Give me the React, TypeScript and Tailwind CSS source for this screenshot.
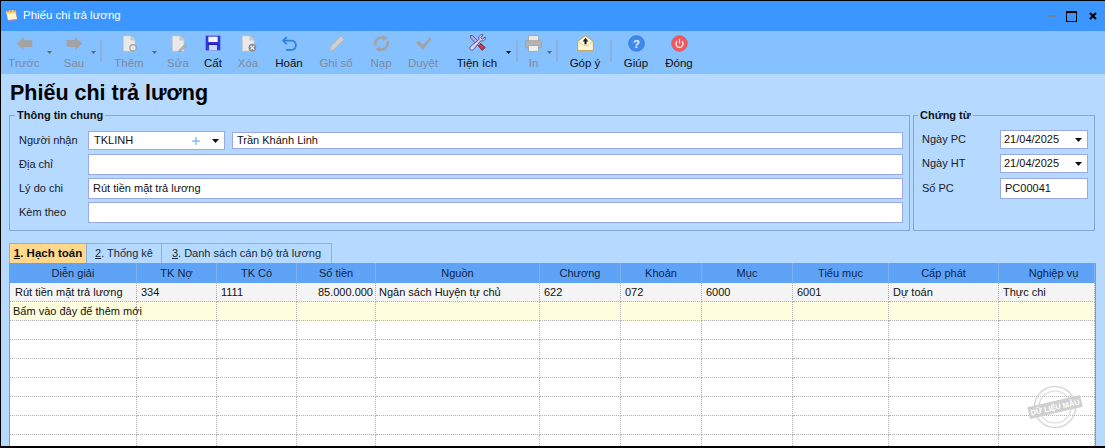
import React from "react";

const gray = "#a3a3a3";

function AppIcon() {
  return (
    <svg width="16" height="16" viewBox="0 0 16 16">
      <path d="M2 4 L12 2 L14 12 L4 14 Z" fill="#8f86d8" />
      <path d="M2 3 L11 2 L13 11 L4 12 Z" fill="#fdf6c8" />
      <path d="M2 3 L11 2 L11.6 5 L2.6 6 Z" fill="#f2cf6a" />
      <path d="M4 1 V4 M7 1 V4 M10 1 V3.5" stroke="#7a74b8" strokeWidth="1" />
    </svg>
  );
}

function ArrowLeft() {
  return (
    <svg width="17" height="17" viewBox="0 0 24 24">
      <path d="M1 12 L11 3 V7 H23 V17 H11 V21 Z" fill={gray} />
    </svg>
  );
}

function ArrowRight() {
  return (
    <svg width="17" height="17" viewBox="0 0 24 24">
      <path d="M23 12 L13 3 V7 H1 V17 H13 V21 Z" fill={gray} />
    </svg>
  );
}

function Doc({ children }: { children?: React.ReactNode }) {
  return (
    <svg width="17" height="17" viewBox="0 0 24 24">
      <path d="M3 1 H14 L20 7 V23 H3 Z" fill="#e9e9e9" stroke="#b8b8b8" />
      <path d="M14 1 V7 H20" fill="#cfcfcf" stroke="#b8b8b8" />
      {children}
    </svg>
  );
}

function Floppy() {
  return (
    <svg width="16" height="16" viewBox="0 0 24 24">
      <path d="M1 1 H23 V23 H1 Z" fill="#3535dc" />
      <rect x="5" y="2.5" width="14" height="8" fill="#f0f2ff" />
      <rect x="6" y="15" width="12" height="8" fill="#c9d4ff" />
      <rect x="4" y="13" width="16" height="2" fill="#1f1fb0" />
    </svg>
  );
}

function Undo() {
  return (
    <svg width="17" height="17" viewBox="0 0 24 24" fill="none">
      <path d="M8 3 L3 8 L8 13" stroke="#2f7fe0" strokeWidth="2.6" strokeLinejoin="round" />
      <path d="M4 8 H15 C23 8 23 21 15 21 H7" stroke="#2f7fe0" strokeWidth="2.6" />
    </svg>
  );
}

function Pencil() {
  return (
    <svg width="17" height="17" viewBox="0 0 24 24">
      <path d="M18 1 L23 6 L8 21 L2 23 L4 16 Z" fill="#cfcfcf" stroke="#aeaeae" />
    </svg>
  );
}

function Reload() {
  return (
    <svg width="17" height="17" viewBox="0 0 24 24" fill="none">
      <path d="M4 15 C1 8 8 2 15 4" stroke={gray} strokeWidth="3.6" />
      <path d="M20 9 C23 16 16 22 9 20" stroke={gray} strokeWidth="3.6" />
      <path d="M13 0 L21 4 L14 9 Z M11 24 L3 20 L10 15 Z" fill={gray} />
    </svg>
  );
}

function Check() {
  return (
    <svg width="17" height="17" viewBox="0 0 24 24">
      <path d="M1 10 L6 8 L11 14 L21 3 L23 6 L11 21 Z" fill={gray} />
    </svg>
  );
}

function Tools() {
  return (
    <svg width="18" height="18" viewBox="0 0 24 24">
      <path d="M3 2 L6 2 L20 16 L17 19 L4 6 Z" fill="#b5a5e8" stroke="#3b3560" strokeWidth="0.9" />
      <path d="M14 16 L19 22 L23 18 L17 13 Z" fill="#d8334a" stroke="#5a1320" strokeWidth="0.9" />
      <path d="M20 1 C17 0 13 3 15 7 L3 17 C1 20 4 23 7 21 L17 9 C20 10 24 8 23 4 L19 7 L17 5 Z" fill="#d9d2f5" stroke="#3b3560" strokeWidth="1" />
    </svg>
  );
}

function Printer() {
  return (
    <svg width="17" height="17" viewBox="0 0 24 24">
      <rect x="5" y="1" width="14" height="8" fill="#e8e8e8" stroke="#9e9e9e" />
      <rect x="1" y="8" width="22" height="10" rx="1" fill="#b4b4b4" stroke="#9a9a9a" />
      <rect x="5" y="15" width="14" height="8" fill="#eeeeee" stroke="#9e9e9e" />
    </svg>
  );
}

function Mail() {
  return (
    <svg width="17" height="17" viewBox="0 0 24 24">
      <path d="M1 9 L12 1 L23 9 V22 H1 Z" fill="#fff6d6" stroke="#c9a04a" strokeWidth="1.3" />
      <path d="M1 9 L9 15 H15 L23 9" fill="none" stroke="#d8b870" />
      <path d="M12 4 L16 9 H13.5 V13 H10.5 V9 H8 Z" fill="#222" />
    </svg>
  );
}

function Help() {
  return (
    <svg width="17" height="17" viewBox="0 0 24 24">
      <circle cx="12" cy="12" r="11" fill="#3f8af0" stroke="#2c6cc8" />
      <text x="12" y="18" textAnchor="middle" fontSize="16" fontWeight="700" fill="#e8f2ff" fontFamily="'Liberation Sans', sans-serif">?</text>
    </svg>
  );
}

function Power() {
  return (
    <svg width="17" height="17" viewBox="0 0 24 24" fill="none">
      <circle cx="12" cy="12" r="11" fill="#ef5a5f" stroke="#e04e54" />
      <path d="M8.6 8.8 A5 5 0 1 0 15.4 8.8" stroke="#fff" strokeWidth="1.6" />
      <path d="M12 6 V12" stroke="#fff" strokeWidth="1.6" />
    </svg>
  );
}

function Caret({ color = "#555", small }: { color?: string; small?: boolean }) {
  return (
    <svg width={small ? 5 : 7} height={small ? 3 : 4} viewBox="0 0 7 4">
      <path d="M0 0 H7 L3.5 4 Z" fill={color} />
    </svg>
  );
}

function ToolButton({
  label,
  icon,
  size,
  off,
  caret,
}: {
  label: string;
  icon: React.ReactNode;
  size: string;
  off?: boolean;
  caret?: boolean;
}) {
  return (
    <div className="flex">
      <div className={`flex flex-col items-center ${size}`}>
        <div className="flex h-[22px] items-center justify-center">{icon}</div>
        <span className={`mt-[1px] text-[11.5px] leading-[16px] whitespace-nowrap ${off ? "text-[#7f8b99]" : "text-[#101010]"}`}>
          {label}
        </span>
      </div>
      {caret && (
        <div className="flex w-[7px] justify-center pt-[19px]">
          <Caret small color={off ? "#666" : "#111"} />
        </div>
      )}
    </div>
  );
}

function Sep({ className }: { className: string }) {
  return <div className={`mt-[8px] h-[22px] w-[2px] bg-[#8fb0de] ${className}`} />;
}

function Toolbar() {
  return (
    <div className="flex h-[43px] bg-[#85c0ff] pt-[1px] pl-[1px]">
      <ToolButton label="Trước" icon={<ArrowLeft />} size="w-[44px]" off caret />
      <div className="ml-[5px]">
        <ToolButton label="Sau" icon={<ArrowRight />} size="w-[32px]" off caret />
      </div>
      <Sep className="ml-[3px]" />
      <div className="ml-[5px]">
        <ToolButton
          label="Thêm"
          icon={<Doc><circle cx="17" cy="18" r="4.5" fill="#e6e6e6" stroke="#9e9e9e" strokeWidth="1.6" /></Doc>}
          size="w-[44px]"
          off
          caret
        />
      </div>
      <ToolButton
        label="Sửa"
        icon={<Doc><path d="M21 13 L23.5 15.5 L15 23 L12 24 L13 21 Z" fill="#b5b5b5" stroke="#8f8f8f" strokeWidth="0.7" /></Doc>}
        size="w-[40px]"
        off
      />
      <ToolButton label="Cất" icon={<Floppy />} size="w-[30px]" />
      <ToolButton
        label="Xóa"
        icon={
          <Doc>
            <circle cx="17.5" cy="18" r="5.5" fill="#8a8f96" />
            <path d="M15 15.5 L20 20.5 M20 15.5 L15 20.5" stroke="#fff" strokeWidth="1.5" />
          </Doc>
        }
        size="w-[40px]"
        off
      />
      <ToolButton label="Hoãn" icon={<Undo />} size="w-[42px]" />
      <ToolButton label="Ghi sổ" icon={<Pencil />} size="w-[52px]" off />
      <ToolButton label="Nạp" icon={<Reload />} size="w-[38px]" off />
      <ToolButton label="Duyệt" icon={<Check />} size="w-[46px]" off />
      <div className="ml-[3px]">
        <ToolButton label="Tiện ích" icon={<Tools />} size="w-[56px]" caret />
      </div>
      <Sep className="ml-[4px]" />
      <div className="ml-[3px]">
        <ToolButton label="In" icon={<Printer />} size="w-[25px]" off caret />
      </div>
      <Sep className="ml-[3px]" />
      <div className="ml-[2px]">
        <ToolButton label="Góp ý" icon={<Mail />} size="w-[50px]" />
      </div>
      <Sep className="" />
      <ToolButton label="Giúp" icon={<Help />} size="w-[48px]" />
      <ToolButton label="Đóng" icon={<Power />} size="w-[38px]" />
    </div>
  );
}

const inputBase = "flex items-center border border-[#9aa8e6] bg-white text-[11px] text-[#111]";

function FormRow({ label, value }: { label: string; value?: string }) {
  return (
    <div className="mt-[3px] flex items-center first:mt-[2px]">
      <span className="w-[69px] text-[11px] text-[#1a1a2a]">{label}</span>
      <div className={`${inputBase} h-[21px] flex-1 pl-[4px]`}>{value}</div>
    </div>
  );
}

function DateRow({ label, value }: { label: string; value: string }) {
  return (
    <div className="flex items-center">
      <span className="w-[78px] text-[11px] text-[#1a1a2a]">{label}</span>
      <div className={`${inputBase} h-[19px] w-[88px] justify-between pr-[5px] pl-[3px]`}>
        {value}
        <Caret color="#111" />
      </div>
    </div>
  );
}

function Legend({ text }: { text: string }) {
  return <legend className="-ml-[4px] px-[2px] text-[11px] leading-[12px] font-bold text-[#111]">{text}</legend>;
}

const columns = [
  { name: "Diễn giải", value: "Rút tiền mặt trả lương", cell: "pl-[5px]", head: "" },
  { name: "TK Nợ", value: "334", cell: "pl-[4px]", head: "" },
  { name: "TK Có", value: "1111", cell: "pl-[4px]", head: "" },
  { name: "Số tiền", value: "85.000.000", cell: "justify-end pr-[2px]", head: "" },
  { name: "Nguồn", value: "Ngân sách Huyện tự chủ", cell: "pl-[3px]", head: "" },
  { name: "Chương", value: "622", cell: "pl-[4px]", head: "" },
  { name: "Khoản", value: "072", cell: "pl-[4px]", head: "" },
  { name: "Mục", value: "6000", cell: "pl-[4px]", head: "" },
  { name: "Tiểu mục", value: "6001", cell: "pl-[4px]", head: "" },
  { name: "Cấp phát", value: "Dự toán", cell: "pl-[4px]", head: "" },
  { name: "Nghiệp vụ", value: "Thực chi", cell: "pl-[4px]", head: "pl-[14px]" },
];

const gridCols = "grid grid-cols-[127px_80px_80px_79px_164px_81px_81px_91px_96px_110px_96px]";
const cellBase = "flex h-[19px] items-center border-r border-b border-dotted border-[#b0b0b0] text-[11px] text-[#111] whitespace-nowrap";

function DataGrid() {
  return (
    <div className="relative h-[183px] w-[1087px] overflow-hidden border-r border-l border-[#7a9ccc] bg-white">
      <div className={`${gridCols} h-[20px] bg-[#5fa3f7]`}>
        {columns.map((c) => (
          <div key={c.name} className={`flex items-center justify-center border-r border-[#7fb2ee] text-[11px] text-[#10233f] ${c.head}`}>
            {c.name}
          </div>
        ))}
      </div>
      <div className={`${gridCols} bg-[#f4f4f4]`}>
        {columns.map((c) => (
          <div key={c.name} className={`${cellBase} ${c.cell}`}>
            {c.value}
          </div>
        ))}
      </div>
      <div className={`${gridCols} bg-[#ffffe0]`}>
        {columns.map((c, i) => (
          <div key={c.name} className={`${cellBase} ${i === 0 ? "pl-[3px]" : ""}`}>
            {i === 0 ? "Bấm vào đây để thêm mới" : ""}
          </div>
        ))}
      </div>
      {[0, 1, 2, 3, 4, 5, 6].map((r) => (
        <div key={r} className={gridCols}>
          {columns.map((c) => (
            <div key={c.name} className={cellBase} />
          ))}
        </div>
      ))}
      <div className="absolute top-[119px] right-[11px]">
        <svg width="58" height="50" viewBox="0 0 58 50" fill="none">
          <circle cx="29" cy="25" r="20.5" stroke="#d8d8d8" strokeWidth="1.6" />
          <circle cx="29" cy="25" r="16" stroke="#d8d8d8" strokeWidth="1.2" />
          <g transform="rotate(-13 29 25)">
            <rect x="2" y="19" width="54" height="12" fill="#cfcfcf" />
            <text x="29" y="28" textAnchor="middle" fontSize="7.5" fontWeight="700" fill="#fff" fontFamily="'Liberation Sans', sans-serif">
              DỮ LIỆU MẪU
            </text>
          </g>
        </svg>
      </div>
    </div>
  );
}

export default function App() {
  const tabBase = "flex h-[20px] items-center justify-center border-t border-r border-[#8ab0dd] whitespace-nowrap";
  return (
    <div className="flex h-[448px] w-[1105px] flex-col overflow-hidden border-t border-b-2 border-l border-black bg-[#b5d9ff] font-['Liberation_Sans',sans-serif]">
      <div className="flex h-[30px] items-center bg-[#3b96ff] pr-[8px] pl-[3px]">
        <AppIcon />
        <span className="ml-[3px] text-[11.5px] text-white">Phiếu chi trả lương</span>
        <div className="ml-auto flex items-center">
          <div className="h-[2px] w-[7px] bg-[#6e7f96]" />
          <div className="ml-[11px] h-[11px] w-[11px] border border-t-2 border-black" />
          <svg className="ml-[12px]" width="8" height="8" viewBox="0 0 8 8">
            <path d="M1 1 L7 7 M7 1 L1 7" stroke="#000" strokeWidth="2" />
          </svg>
        </div>
      </div>
      <Toolbar />
      <div className="flex flex-1 flex-col pl-[8px]">
        <h1 className="mt-[6px] ml-[1px] h-[26px] text-[21.5px] leading-[26px] font-bold text-black">Phiếu chi trả lương</h1>
        <div className="mt-[3px] flex h-[122px]">
          <fieldset className="h-[122px] w-[901px] border border-[#85a5d5] pt-[10px] pr-[6px] pl-[9px]">
            <Legend text="Thông tin chung" />
            <div className="flex items-center">
              <span className="w-[69px] text-[11px] text-[#1a1a2a]">Người nhận</span>
              <div className={`${inputBase} h-[19px] w-[137px] pr-[5px] pl-[5px]`}>
                TKLINH
                <svg className="mr-[12px] ml-auto" width="8" height="8" viewBox="0 0 8 8">
                  <path d="M4 0 V8 M0 4 H8" stroke="#5aa0e0" strokeWidth="1" />
                </svg>
                <Caret color="#111" />
              </div>
              <div className={`${inputBase} ml-[7px] h-[17px] flex-1 pl-[4px]`}>Trần Khánh Linh</div>
            </div>
            <div className="pt-[2px]">
              <FormRow label="Địa chỉ" />
              <FormRow label="Lý do chi" value="Rút tiền mặt trả lương" />
              <FormRow label="Kèm theo" />
            </div>
          </fieldset>
          <fieldset className="ml-[3px] h-[122px] w-[182px] border border-[#85a5d5] pt-[9px] pl-[8px]">
            <Legend text="Chứng từ" />
            <div className="flex flex-col gap-[5px]">
              <DateRow label="Ngày PC" value="21/04/2025" />
              <DateRow label="Ngày HT" value="21/04/2025" />
              <div className="flex items-center">
                <span className="w-[78px] text-[11px] text-[#1a1a2a]">Số PC</span>
                <div className={`${inputBase} h-[21px] w-[88px] pl-[4px]`}>PC00041</div>
              </div>
            </div>
          </fieldset>
        </div>
        <div className="mt-[12px] flex">
          <div className={`${tabBase} w-[78px] border-l bg-[#ffd88c] text-[11.5px] font-bold text-[#111]`}>
            <span><u>1</u>. Hạch toán</span>
          </div>
          <div className={`${tabBase} w-[75px] text-[11px] text-[#1a2a3a]`}>
            <span><u>2</u>. Thống kê</span>
          </div>
          <div className={`${tabBase} w-[170px] text-[11px] text-[#1a2a3a]`}>
            <span><u>3</u>. Danh sách cán bộ trả lương</span>
          </div>
        </div>
        <DataGrid />
      </div>
    </div>
  );
}
